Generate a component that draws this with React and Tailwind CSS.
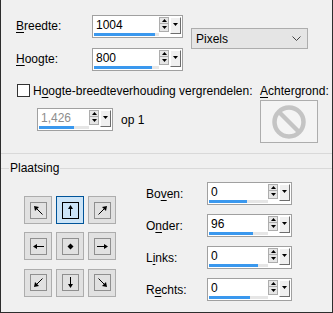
import React from "react";

function Up() {
  return (
    <svg width="5" height="3" viewBox="0 0 5 3" className="block">
      <path d="M0 3 L5 3 L2.5 0 Z" fill="#000" />
    </svg>
  );
}
function Down() {
  return (
    <svg width="5" height="3" viewBox="0 0 5 3" className="block">
      <path d="M0 0 L5 0 L2.5 3 Z" fill="#000" />
    </svg>
  );
}

function Spin({ w, value, fill, disabled }) {
  return (
    <div className={`flex h-[23px] ${w} border border-[#a0a0a0] bg-white`}>
      <div className="flex min-w-0 flex-1 flex-col">
        <div className={`pl-[3px] pt-[3px] text-[12px] leading-[13px] ${disabled ? "text-[#8d8d8d]" : "text-black"}`}>
          {value}
        </div>
        <div className="mt-auto mb-[1px] ml-[1px] h-[3px] bg-[#e6e6e6]">
          <div className="h-full bg-[#3a98ee]" style={{ width: fill }} />
        </div>
      </div>
      <div className="flex items-start gap-[1px] pt-[1px] pr-[1px]">
        <div className="flex w-[10px] flex-col">
          <div className="flex h-[7px] items-center justify-center border border-[#adadad] bg-[#e6e6e6]">
            <Up />
          </div>
          <div className="flex h-[8px] items-center justify-center border border-t-0 border-[#adadad] bg-[#e6e6e6]">
            <Down />
          </div>
        </div>
        <div className="flex h-[17px] w-[11px] justify-center border border-l-white border-t-white border-r-[#6d6d6d] border-b-[#6d6d6d] bg-[#f0f0f0] pt-[5px]">
          <Down />
        </div>
      </div>
    </div>
  );
}

function Arrow({ dir }) {
  const s = { stroke: "#000", strokeWidth: 1, fill: "none" };
  const content = {
    tl: (
      <>
        <path d="M11.5 11.5 L4 4" {...s} />
        <path d="M3 3 L8 4 L4 8 Z" fill="#000" />
      </>
    ),
    t: (
      <>
        <path d="M7.5 13 L7.5 5" {...s} />
        <path d="M7.5 2 L10 6 L5 6 Z" fill="#000" />
      </>
    ),
    tr: (
      <>
        <path d="M3.5 11.5 L11 4" {...s} />
        <path d="M12 3 L7 4 L11 8 Z" fill="#000" />
      </>
    ),
    l: (
      <>
        <path d="M13 7.5 L5 7.5" {...s} />
        <path d="M2 7.5 L6 5 L6 10 Z" fill="#000" />
      </>
    ),
    c: <path d="M7.5 4.5 L10.5 7.5 L7.5 10.5 L4.5 7.5 Z" fill="#000" />,
    r: (
      <>
        <path d="M2 7.5 L10 7.5" {...s} />
        <path d="M13 7.5 L9 5 L9 10 Z" fill="#000" />
      </>
    ),
    bl: (
      <>
        <path d="M11.5 3.5 L4 11" {...s} />
        <path d="M3 12 L4 7 L8 11 Z" fill="#000" />
      </>
    ),
    b: (
      <>
        <path d="M7.5 2 L7.5 10" {...s} />
        <path d="M7.5 13 L10 9 L5 9 Z" fill="#000" />
      </>
    ),
    br: (
      <>
        <path d="M3.5 3.5 L11 11" {...s} />
        <path d="M12 12 L7 11 L11 7 Z" fill="#000" />
      </>
    ),
  }[dir];
  return (
    <svg width="15" height="15" viewBox="0 0 15 15" className="block">
      {content}
    </svg>
  );
}

function PosBtn({ dir, selected }) {
  return (
    <div
      className={`flex h-[28px] w-[28px] items-center justify-center border ${
        selected ? "border-[#005499] bg-[#cce4f7]" : "border-[#adadad] bg-[#e1e1e1]"
      }`}
    >
      <div
        className={`flex h-[17px] w-[17px] items-center justify-center border ${
          selected ? "border-[#000] outline outline-1 outline-[#cce4f7]" : "border-[#8f8f8f]"
        }`}
      >
        <Arrow dir={dir} />
      </div>
    </div>
  );
}

function Field({ label, value, fill }) {
  return (
    <div className="flex h-[23px] items-center">
      <div className="w-[61px]">{label}</div>
      <Spin w="w-[85px]" value={value} fill={fill} />
    </div>
  );
}

export default function App() {
  return (
    <div className="flex h-[313px] w-[333px] flex-col border-x border-b border-[#2d2d2d] bg-[#f0f0f0] font-['Liberation_Sans',Arial,sans-serif] text-[12px] leading-[14px] text-black">
      {/* top */}
      <div className="flex pt-[14px]">
        <div className="flex flex-col gap-[9px] pl-[15px]">
          <div className="flex h-[24px] items-center">
            <div className="w-[76px]">
              <span className="underline underline-offset-2">B</span>reedte:
            </div>
            <Spin w="w-[91px]" value="1004" fill="61px" />
          </div>
          <div className="flex h-[24px] items-center">
            <div className="w-[76px]">
              <span className="underline underline-offset-2">H</span>oogte:
            </div>
            <Spin w="w-[91px]" value="800" fill="58px" />
          </div>
        </div>
        <div className="ml-[8px] mt-[14px] flex h-[21px] w-[117px] items-center justify-between border border-[#adadad] bg-[#e5e5e5] pl-[4px] pr-[6px]">
          <span>Pixels</span>
          <svg width="9" height="5" viewBox="0 0 9 5">
            <path d="M0.5 0.5 L4.5 4.5 L8.5 0.5" stroke="#444" fill="none" />
          </svg>
        </div>
      </div>

      {/* middle */}
      <div className="mt-[13px] flex">
        <div className="flex w-[259px] flex-col">
          <div className="flex h-[13px] items-center pl-[16px]">
            <div className="h-[13px] w-[13px] border border-[#333] bg-white" />
            <div className="ml-[3px] whitespace-nowrap">
              H<span className="underline underline-offset-2">o</span>ogte-breedteverhouding vergrendelen:
            </div>
          </div>
          <div className="mt-[11px] flex items-center pl-[36px]">
            <Spin w="w-[76px]" value="1,426" fill="35px" disabled />
            <span className="ml-[8px]">op 1</span>
          </div>
        </div>
        <div className="flex flex-col">
          <div className="flex h-[13px] items-center whitespace-nowrap">
            <span className="underline underline-offset-2">A</span>chtergrond:
          </div>
          <div className="mt-[3px] flex h-[43px] w-[58px] items-center justify-center border border-[#adadad] bg-[#f4f4f4]">
            <svg width="34" height="34" viewBox="0 0 34 34">
              <circle cx="17" cy="17" r="14.5" stroke="#c4c4c4" strokeWidth="4.5" fill="none" />
              <path d="M7 7 L27 27" stroke="#c4c4c4" strokeWidth="4.5" />
            </svg>
          </div>
        </div>
      </div>

      {/* separator */}
      <div className="mt-[10px] h-px bg-[#d9d9d9]" />

      {/* group title */}
      <div className="mt-[7px] flex h-[14px] items-center">
        <div className="h-px w-[8px] bg-[#d9d9d9]" />
        <div className="px-[1px]">Plaatsing</div>
        <div className="h-px flex-1 bg-[#d9d9d9]" />
      </div>

      {/* group body */}
      <div className="flex pl-[23px]">
        <div className="mt-[21px] grid grid-cols-3 gap-[4px]">
          <PosBtn dir="tl" />
          <PosBtn dir="t" selected />
          <PosBtn dir="tr" />
          <PosBtn dir="l" />
          <PosBtn dir="c" />
          <PosBtn dir="r" />
          <PosBtn dir="bl" />
          <PosBtn dir="b" />
          <PosBtn dir="br" />
        </div>
        <div className="ml-[30px] mt-[7px] flex flex-col gap-[9px]">
          <Field label={<>Bo<span className="underline underline-offset-2">v</span>en:</>} value="0" fill="38px" />
          <Field label={<>O<span className="underline underline-offset-2">n</span>der:</>} value="96" fill="44px" />
          <Field label={<>L<span className="underline underline-offset-2">i</span>nks:</>} value="0" fill="49px" />
          <Field label={<>R<span className="underline underline-offset-2">e</span>chts:</>} value="0" fill="41px" />
        </div>
      </div>
    </div>
  );
}
